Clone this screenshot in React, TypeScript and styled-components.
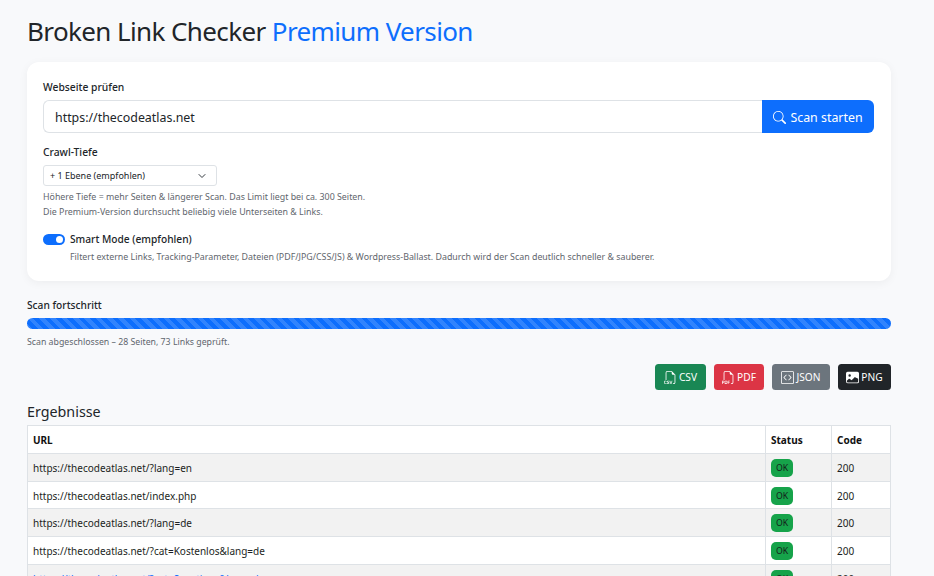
import React from "react";
import styled, { createGlobalStyle } from "styled-components";
import { BsSearch, BsFiletypeCsv, BsFiletypePdf, BsCodeSquare, BsImageFill } from "react-icons/bs";

const Global = createGlobalStyle`
  html, body { margin: 0; padding: 0; height: 576px; overflow: hidden; background: #f8f9fb; }
  body { font-family: "Noto Sans", "Open Sans", sans-serif; color: #212529; }
  * { box-sizing: border-box; }
`;

const Page = styled.div`
  width: 934px;
  padding: 12px 43px 0 27px;
  height: 576px;
  overflow: hidden;
`;
const Title = styled.h1`
  margin: 0 0 11px;
  font-size: 26px;
  line-height: 39px;
  font-weight: 400;
  color: #212529;
  letter-spacing: -0.61px;
`;
const Accent = styled.span`
  color: #0d6efd;
`;
const Card = styled.section`
  background: #fff;
  border-radius: 12px;
  box-shadow: 0 2px 10px rgba(0, 0, 0, 0.05);
  padding: 17px 17px 16px 16px;
  height: 219px;
  margin-bottom: 16px;
`;
const Label = styled.div`
  font-size: 10.3px;
  font-weight: 500;
  line-height: 16px;
  margin-bottom: 5px;
`;
const InputGroup = styled.div`
  display: flex;
  height: 33px;
  margin-bottom: 11px;
`;
const UrlInput = styled.div`
  flex: 1;
  border: 1px solid #dee2e6;
  border-right: 0;
  border-radius: 6px 0 0 6px;
  padding: 0 11px;
  font-size: 12.4px;
  line-height: 33px;
`;
const ScanButton = styled.button`
  width: 112px;
  border: 0;
  background: #0d6efd;
  color: #fff;
  border-radius: 0 6px 6px 0;
  font: inherit;
  font-size: 12.4px;
  display: flex;
  align-items: center;
  justify-content: center;
  gap: 4px;
  padding: 1px 0 0;
`;
const SelectBox = styled.div`
  width: 174px;
  height: 21px;
  border: 1px solid #dee2e6;
  border-radius: 3px;
  margin-bottom: 4px;
  font-size: 9px;
  line-height: 19px;
  padding: 0 6px;
  display: flex;
  justify-content: space-between;
  align-items: center;
`;
const Chevron = styled.svg`
  width: 8px;
  height: 8px;
  margin-right: 4px;
`;
const Help = styled.div`
  font-size: 8.85px;
  line-height: 15px;
  color: #5f666d;
`;
const SwitchRow = styled.div`
  display: flex;
  align-items: center;
  gap: 5px;
  margin-top: 11px;
  height: 16px;
`;
const Switch = styled.span`
  width: 22px;
  height: 11px;
  border-radius: 6px;
  background: #0d6efd;
  display: flex;
  justify-content: flex-end;
  align-items: center;
  padding-right: 2px;
  &::after {
    content: "";
    width: 7px;
    height: 7px;
    border-radius: 50%;
    background: #fff;
  }
`;
const SwitchLabel = styled.span`
  font-size: 10.2px;
  font-weight: 500;
`;
const SwitchHelp = styled(Help)`
  margin: 3px 0 0 27px;
`;
const ProgressLabel = styled.div`
  font-size: 10.2px;
  font-weight: 500;
  line-height: 16px;
  margin-bottom: 5px;
`;
const Progress = styled.div`
  height: 11px;
  border-radius: 6px;
  background-color: #0d6efd;
  background-image: repeating-linear-gradient(
    45deg,
    rgba(255, 255, 255, 0.15) 0 4px,
    transparent 4px 8px
  );
  margin-bottom: 6px;
`;
const Done = styled.div`
  font-size: 8.75px;
  line-height: 14px;
  color: #5f666d;
  margin-bottom: 15px;
`;
const Exports = styled.div`
  display: flex;
  justify-content: flex-end;
  gap: 8px;
  margin-bottom: 11px;
`;
const ExportButton = styled.button<{ $bg: string; $w: number }>`
  width: ${(p) => p.$w}px;
  height: 26px;
  border: 0;
  border-radius: 3.5px;
  background: ${(p) => p.$bg};
  color: #fff;
  font: inherit;
  font-size: 10.2px;
  display: flex;
  align-items: center;
  justify-content: center;
  gap: 2px;
  padding: 0;
  svg {
    width: 13px;
    height: 13px;
    flex: none;
  }
`;
const Heading = styled.h2`
  margin: 0 0 3px;
  font-size: 14.3px;
  font-weight: 400;
  line-height: 21px;
`;
const Table = styled.table`
  width: 864px;
  border-collapse: collapse;
  table-layout: fixed;
  background: #fff;
  font-size: 10px;
`;
const Th = styled.th<{ $w?: number }>`
  width: ${(p) => (p.$w ? `${p.$w}px` : "auto")};
  border: 1px solid #dee2e6;
  text-align: left;
  font-weight: 700;
  padding: 0 5px;
  height: 28px;
  color: #111;
`;
const Row = styled.tr<{ $odd: boolean }>`
  background: ${(p) => (p.$odd ? "#f2f2f2" : "#fff")};
`;
const Td = styled.td`
  border: 1px solid #dee2e6;
  padding: 1px 5px 0;
  height: 27.7px;
  white-space: nowrap;
  overflow: hidden;
  color: #1b1f23;
`;
const Link = styled.span`
  color: #0d6efd;
`;
const Badge = styled.span`
  display: inline-block;
  background: #16a34a;
  color: #14201a;
  font-size: 8.7px;
  line-height: 18px;
  height: 18px;
  width: 22px;
  text-align: center;
  border-radius: 5px;
  vertical-align: middle;
`;

const rows: [React.ReactNode][] = [
  ["https://thecodeatlas.net/?lang=en"],
  ["https://thecodeatlas.net/index.php"],
  ["https://thecodeatlas.net/?lang=de"],
  ["https://thecodeatlas.net/?cat=Kostenlos&lang=de"],
  [<Link>https://thecodeatlas.net/?cat=Sonstiges&lang=de</Link>],
];

export default function App() {
  return (
    <Page>
      <Global />
      <Title>
        Broken Link Checker <Accent>Premium Version</Accent>
      </Title>
      <Card>
        <Label>Webseite prüfen</Label>
        <InputGroup>
          <UrlInput>https://thecodeatlas.net</UrlInput>
          <ScanButton>
            <BsSearch size={13} />
            Scan starten
          </ScanButton>
        </InputGroup>
        <Label>Crawl-Tiefe</Label>
        <SelectBox>
          + 1 Ebene (empfohlen)
          <Chevron viewBox="0 0 16 16" fill="none" stroke="#343a40" strokeWidth="2" strokeLinecap="round" strokeLinejoin="round">
            <path d="M2 5l6 6 6-6" />
          </Chevron>
        </SelectBox>
        <Help>Höhere Tiefe = mehr Seiten &amp; längerer Scan. Das Limit liegt bei ca. 300 Seiten.</Help>
        <Help>Die Premium-Version durchsucht beliebig viele Unterseiten &amp; Links.</Help>
        <SwitchRow>
          <Switch />
          <SwitchLabel>Smart Mode (empfohlen)</SwitchLabel>
        </SwitchRow>
        <SwitchHelp>
          Filtert externe Links, Tracking-Parameter, Dateien (PDF/JPG/CSS/JS) &amp; Wordpress-Ballast. Dadurch wird der Scan deutlich schneller &amp; sauberer.
        </SwitchHelp>
      </Card>
      <ProgressLabel>Scan fortschritt</ProgressLabel>
      <Progress />
      <Done>Scan abgeschlossen – 28 Seiten, 73 Links geprüft.</Done>
      <Exports>
        <ExportButton $bg="#198754" $w={51}><BsFiletypeCsv />CSV</ExportButton>
        <ExportButton $bg="#dc3545" $w={50}><BsFiletypePdf />PDF</ExportButton>
        <ExportButton $bg="#6c757d" $w={58}><BsCodeSquare />JSON</ExportButton>
        <ExportButton $bg="#212529" $w={53}><BsImageFill />PNG</ExportButton>
      </Exports>
      <Heading>Ergebnisse</Heading>
      <Table>
        <thead>
          <tr>
            <Th>URL</Th>
            <Th $w={66}>Status</Th>
            <Th $w={59}>Code</Th>
          </tr>
        </thead>
        <tbody>
          {rows.map(([u], i) => (
            <Row key={i} $odd={i % 2 === 0}>
              <Td>{u}</Td>
              <Td><Badge>OK</Badge></Td>
              <Td>200</Td>
            </Row>
          ))}
        </tbody>
      </Table>
    </Page>
  );
}
